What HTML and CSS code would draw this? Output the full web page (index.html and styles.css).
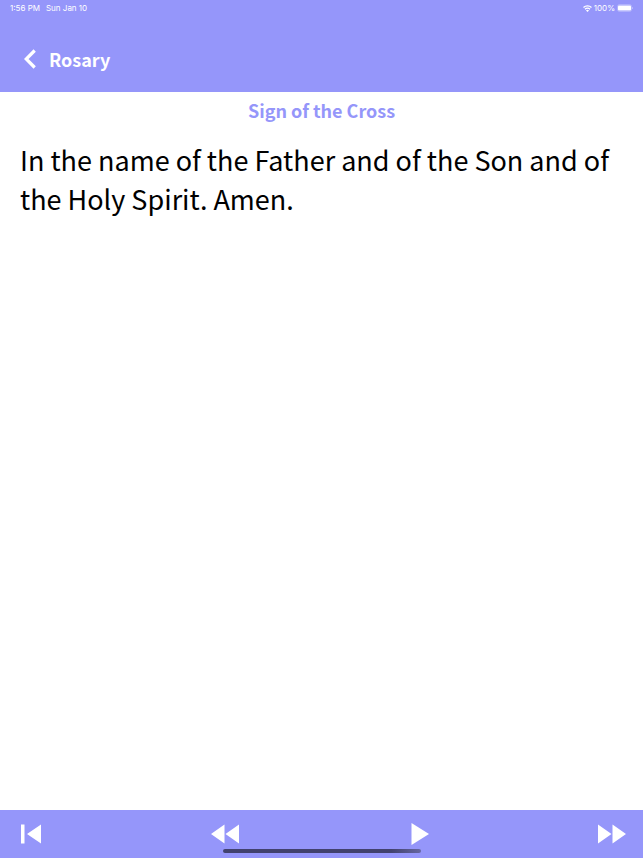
FILE: index.html
```html
<!DOCTYPE html>
<html lang="en">
<head>
  <meta charset="UTF-8">
  <meta name="viewport" content="width=device-width, initial-scale=1.0">
  <title>Rosary</title>
  <link rel="stylesheet" href="styles.css">
</head>
<body>
  <header>
    <div class="status">
      <span>1:56 PM</span>
      <span>Sun Jan 10</span>
      <div class="status-right">
        <svg width="9" height="7" viewBox="0 0 18 14" aria-hidden="true">
          <path d="M1 5a11.500 11.500 0 0 1 16 0M4 8.500a7 7 0 0 1 10 0" fill="none" stroke="#fff" stroke-width="2.600"/>
          <path d="M9 14L6 11a4.300 4.300 0 0 1 6 0z" fill="#fff"/>
        </svg>
        <span>100%</span>
        <svg width="16" height="8" viewBox="0 0 32 16" aria-hidden="true">
          <rect x="1" y="1" width="28" height="14" rx="4" fill="none" stroke="#fff" stroke-opacity=".5"/>
          <rect x="2" y="3" width="26" height="10" rx="2" fill="#fff"/>
          <path d="M30 6v4q1.500-.5 1.500-2t-1.500-2" fill="#fff" fill-opacity=".6"/>
        </svg>
      </div>
    </div>
    <div class="title-bar">
      <button class="back" aria-label="Back">
        <svg width="12" height="20" viewBox="0 0 12 20"><path d="M10.700 1.500L2.200 10l8.500 8.500" fill="none" stroke="#fff" stroke-width="3.200"/></svg>
      </button>
      <h1>Rosary</h1>
    </div>
  </header>

  <main>
    <h2>Sign of the Cross</h2>
    <p>In the name of the Father and of the Son and of the Holy Spirit. Amen.</p>
  </main>

  <footer>
    <div class="controls">
      <button aria-label="Back to start">
        <svg width="20" height="20" viewBox="0 0 20 20"><path d="M0 .5h3.500v19H0zM20 .5v19L6 10z"/></svg>
      </button>
      <button aria-label="Previous">
        <svg width="28" height="20" viewBox="0 0 28 20"><path d="M13.500.5v19L0 10zM28 .5v19L14.500 10z"/></svg>
      </button>
      <button aria-label="Play">
        <svg width="22" height="22" viewBox="0 0 22 22"><path d="M4.500 0v22L22 11z"/></svg>
      </button>
      <button aria-label="Next">
        <svg width="28" height="20" viewBox="0 0 28 20"><path d="M0 .5v19L13.500 10zM14.500.5v19L28 10z"/></svg>
      </button>
    </div>
    <div class="home-bar"></div>
  </footer>
</body>
</html>
```

FILE: styles.css
```css
* { box-sizing: border-box; }
body { margin: 0; min-height: 100vh; display: flex; flex-direction: column; background: #fff; color: #000; font-family: "Noto Sans CJK SC", "Noto Sans", sans-serif; }
h1, h2, p { margin: 0; }
button { padding: 0; border: none; background: none; cursor: pointer; }
svg { display: block; }

header { background: #9596fa; color: #fff; }
.status { display: flex; align-items: center; gap: 6px; padding: 0 10px; font-family: Inter, sans-serif; font-size: 8px; line-height: 16px; }
.status-right { display: flex; align-items: center; gap: 2px; margin-left: auto; }
.title-bar { display: flex; align-items: center; gap: 13px; padding: 29px 24px 19px; }
.title-bar h1 { font-size: 18px; line-height: 28px; font-weight: bold; }

main { flex: 1; padding: 4px 20px; }
main h2 { font-size: 18px; line-height: 28px; text-align: center; color: #9596fa; }
main p { margin-top: 16px; font-size: 27px; line-height: 39px; }

footer { position: relative; background: #9596fa; }
.controls { display: flex; justify-content: space-between; align-items: center; height: 48px; padding: 0 17px; }
.controls button { display: flex; justify-content: center; width: 28px; }
.controls svg { fill: #fff; flex: none; }
.home-bar { position: absolute; left: 50%; bottom: 5px; width: 198px; height: 4px; margin-left: -99px; border-radius: 2px; background: linear-gradient(to right, #42426f 85%, #6666a2); }
```
